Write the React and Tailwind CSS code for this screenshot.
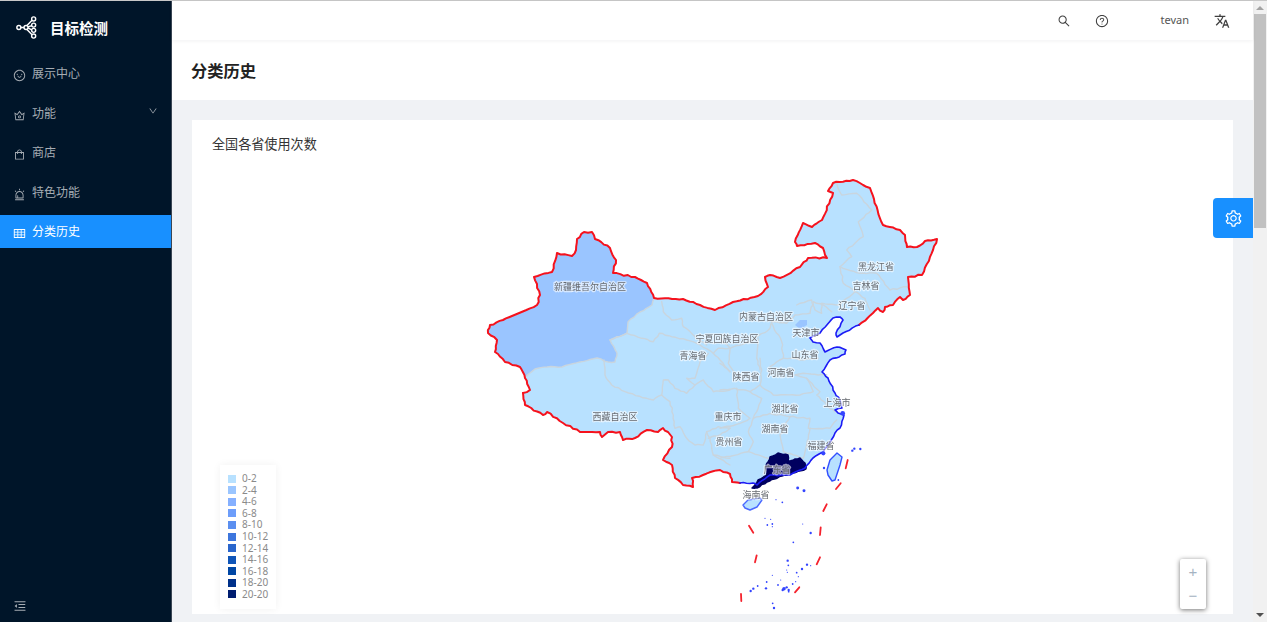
import React from "react";
import {
  AiOutlineSmile, AiOutlineCrown, AiOutlineShopping, AiOutlineAlert, AiOutlineTable,
  AiOutlineSearch, AiOutlineQuestionCircle, AiOutlineSetting, AiOutlineMenuFold, AiOutlineDown,
} from "react-icons/ai";
import { MdTranslate } from "react-icons/md";

const CJK = { fontFamily: '"Noto Sans CJK SC", "Noto Sans", sans-serif' };

const parse = (s) => s.split(" ").map((p) => p.split(",").map(Number));
const rnd = (x, y) => {
  const s = Math.sin(x * 12.9898 + y * 78.233) * 43758.5453;
  return s - Math.floor(s) - 0.5;
};
// Breaks a traced border into short, slightly uneven steps, as a real coastline has.
const rough = (pts, amp = 1.6, step = 4) => {
  const out = [];
  for (let i = 0; i < pts.length - 1; i++) {
    const [ax, ay] = pts[i];
    const [bx, by] = pts[i + 1];
    const len = Math.hypot(bx - ax, by - ay) || 1;
    const n = Math.max(1, Math.ceil(len / step));
    for (let k = 0; k < n; k++) {
      const t = k / n;
      const px = ax + (bx - ax) * t;
      const py = ay + (by - ay) * t;
      const o = k === 0 ? 0 : rnd(px, py) * amp;
      out.push([px - ((by - ay) / len) * o, py + ((bx - ax) / len) * o]);
    }
  }
  out.push(pts[pts.length - 1]);
  return out;
};
const str = (pts) => pts.map(([x, y]) => `${x.toFixed(1)},${y.toFixed(1)}`).join(" ");

const redNorthBase = parse("523,393 530,390 525,378 520,367 505,362 495,352 497,340 488,333 490,325 503,320 512,316 537,305 540,295 534,277 552,272 557,253 572,256 576,250 577,239 584,232 592,232 595,239 610,248 616,260 613,273 635,277 647,283 654,298 683,299 700,305 715,310 733,302 758,296 768,287 765,277 770,275 780,278 800,267 808,258 827,258 823,248 815,243 797,246 795,242 803,223 812,227 822,220 833,193 828,191 833,183 853,180 870,188 883,225 900,230 905,235 907,247 917,247 925,241 937,239 933,250 922,275 908,277 910,295 903,300 900,297 893,305 885,307 883,312 878,308 873,313 859,325");
const blueBase = parse("859,325 843,333 837,337 836,333 843,320 840,317 833,318 820,333 810,338 813,342 820,343 825,352 837,347 846,350 845,354 830,360 822,372 828,378 835,393 840,400 842,408 835,410 838,413 844,415 840,428 835,433 828,445 823,452 813,458 805,468 790,475 770,475 757,485 753,483 740,483");
const redSouthBase = parse("740,483 732,482 730,474 720,470 703,475 692,478 693,487 683,485 675,478 672,465 663,460 672,447 672,437 663,428 658,432 647,430 635,438 623,440 620,432 608,432 602,437 600,432 580,432 563,423 547,412 543,415 525,405 523,393");
const xjInnerBase = parse("654,298 652,305 640,312 628,322 627,333 610,340 617,353 615,362 608,362 597,358 580,362 562,367 547,367 535,369 525,378");

const redA = rough(redNorthBase.slice(0, 3));
const redB = rough(redNorthBase.slice(2, 28));
const redC = rough(redNorthBase.slice(27));
const redNorth = [...redA, ...redB.slice(1), ...redC.slice(1)];
const blueCoast = rough(blueBase, 1.2);
const redSouth = rough(redSouthBase);
const chinaFill = str([...redNorth, ...blueCoast, ...redSouth]);
const xinjiangFill = str([...redB, ...rough(xjInnerBase, 1.2)]);

const guangdong = str(rough(parse("752,488 758,480 767,475 766,466 770,457 778,453 788,455 788,461 800,458 805,463 806,469 782,476 767,482 757,488 752,488"), 1.2, 3));
const hainan = "743,505 748,500 760,498 762,500 757,507 750,510 745,508";
const taiwan = "827,470 830,460 837,453 842,457 840,465 835,480 832,481 828,475";
const beijing = "795,325 800,320 807,320 807,325 800,329";

const at = (ox, oy, arr) => str(rough(arr.map(([x, y]) => [ox + x / 3, oy + y / 3]), 1.4, 4));

const z9 = [
  [[30,135],[80,115],[125,130],[160,140],[178,115],[215,125],[260,135],[300,150],[340,175],[360,195],[390,230]],
  [[185,20],[190,50],[215,75],[245,70],[250,95],[285,125],[320,150]],
  [[12,195],[15,240],[35,270],[75,290],[140,310],[160,315],[185,300],[190,255],[205,255],[225,280],[260,295],[285,270],[260,250],[285,250],[300,200],[325,175]],
  [[185,300],[210,320],[220,360],[225,400],[240,395],[260,430],[285,450],[310,450],[320,410],[355,395],[390,400]],
  [[285,270],[310,255],[340,290],[390,285]],
  [[320,410],[330,430],[340,480],[390,510]],
  [[325,430],[360,420],[390,400]],
  [[340,480],[390,490]],
  [[340,175],[355,160],[390,160]],
];
const z10 = [
  [[0,130],[30,160],[100,135],[150,100],[155,80],[200,85],[225,60],[270,55],[280,20],[310,30],[335,50]],
  [[155,85],[185,140],[190,190],[150,215]],
  [[115,130],[110,190],[120,225]],
  [[30,160],[25,205],[45,235]],
  [[190,190],[225,190],[250,195],[295,190]],
  [[120,270],[160,300],[240,300],[280,290],[260,250],[225,240],[250,235],[295,240],[320,240]],
  [[260,250],[300,290],[290,300],[325,335],[345,350]],
  [[90,290],[125,310],[100,370],[150,355],[210,365],[270,370],[265,400],[330,400],[350,375]],
  [[100,370],[85,410],[100,440],[85,470],[145,490]],
  [[210,365],[180,420],[190,470],[250,490],[260,450],[270,400]],
  [[260,450],[300,460]],
  [[0,285],[45,280],[90,290],[120,270],[125,225],[120,190]],
  [[50,280],[55,340],[90,370],[60,385],[0,400]],
  [[0,490],[85,470]],
  [[0,205],[30,230]],
];
const z3 = [
  [[410,40],[425,75],[470,70],[515,120],[475,155],[490,200],[440,240],[455,260],[420,290],[430,340],[465,365],[415,405],[365,400],[365,430],[345,420],[335,390],[290,405]],
  [[420,290],[480,310],[530,310],[570,360],[620,350]],
  [[465,365],[495,385],[510,420]],
];

const dashes = [
  [[563,180],[557,205]], [[542,250],[528,267]], [[500,313],[490,333]], [[482,382],[480,405]],
  [[480,472],[470,493]], [[418,562],[405,577]], [[243,582],[244,603]], [[290,466],[285,487]], [[267,377],[280,398]],
];
const dots = [
  [577,152,2],[583,146,2],[601,147,2],[492,204,2],[413,264,2.5],[432,272,2.5],[348,299,1],[367,307,1.5],[315,355,1],[332,358,1],
  [322,375,1.5],[337,372,1.5],[337,380,1],[428,372,1],[452,399,2],[400,427,1.5],[383,482,2],[385,496,1.5],[380,510,1],[441,494,2],
  [452,497,1],[426,507,2],[410,518,1.5],[415,530,1],[382,517,1],[337,526,1],[320,546,1.5],[318,565,2],[354,555,1.5],[372,566,3],
  [380,562,2],[386,570,2],[398,552,1.5],[407,545,1],[272,573,2],[280,566,2],[293,558,1.5],[338,610,1.5],[342,624,2],[330,650,1.5],
  [362,540,1],[368,570,2],[535,240,1.5],[490,160,3.5],[548,40,4],[386,575,1.5],
];
const labels = [
  ["新疆维吾尔自治区",590,286],["西藏自治区",615,416],["黑龙江省",876,266],["吉林省",866,285],["辽宁省",852,305],
  ["内蒙古自治区",766,316],["天津市",806,332],["宁夏回族自治区",727,338],["青海省",693,355],["山东省",805,354],
  ["陕西省",746,376],["河南省",781,372],["上海市",837,402],["湖北省",785,408],["重庆市",728,416],["湖南省",775,428],
  ["贵州省",729,441],["福建省",821,445],["广东省",777,469],["海南省",756,494],
];
const legend = [
  ["0-2","#b8e1ff"],["2-4","#9ac5ff"],["4-6","#85b0ff"],["6-8","#6d9dfa"],["8-10","#5b8ff0"],["10-12","#3d76dd"],
  ["12-14","#2a66cc"],["14-16","#0f55b8"],["16-18","#0047a5"],["18-20","#00318a"],["20-20","#001d70"],
];
const menu = [
  ["展示中心", AiOutlineSmile],
  ["功能", AiOutlineCrown, true],
  ["商店", AiOutlineShopping],
  ["特色功能", AiOutlineAlert],
];

function Logo() {
  return (
    <svg width="21" height="23" viewBox="0 0 22 24" fill="none" stroke="white" strokeWidth="1.500">
      <circle cx="3" cy="12" r="2.100" />
      <circle cx="10.500" cy="12" r="2.100" />
      <circle cx="18.500" cy="3" r="2.100" />
      <circle cx="18.500" cy="9.500" r="2.100" />
      <circle cx="18.500" cy="15" r="2.100" />
      <circle cx="18.500" cy="21" r="2.100" />
      <path d="M5 12h3.500M11.500 10 16.800 4.500M12.500 11.500 16.500 10M12.500 12.500 16.500 14.500M11.500 14 16.800 19.500" />
    </svg>
  );
}

function ChinaMap() {
  return (
    <svg className="absolute inset-0 blur-[0.35px]" width="1041" height="494" viewBox="192 120 1041 494" fill="none" strokeLinejoin="round" strokeLinecap="round">
      <polygon points={chinaFill} fill="#b8e1ff" />
      <polygon points={xinjiangFill} fill="#9ac5ff" />
      <polygon points={beijing} fill="#9ac5ff" />
      <g stroke="#c9d5de" strokeWidth="1.400">
        <polyline points={str(rough(xjInnerBase, 1.2))} />
        {z9.map((l, i) => <polyline key={i} points={at(600, 295, l)} />)}
        {z10.map((l, i) => <polyline key={i} points={at(720, 295, l)} />)}
        {z3.map((l, i) => <polyline key={i} points={at(700, 170, l)} />)}
      </g>
      <polygon points={guangdong} fill="#00005f" stroke="#00005f" strokeWidth="1.400" />
      <polygon points={hainan} fill="#b8e1ff" stroke="#4a68ff" strokeWidth="1.400" />
      <polygon points={taiwan} fill="#b8e1ff" stroke="#3350ff" strokeWidth="1.400" />
      <polyline points={str(redNorth)} stroke="#f5121d" strokeWidth="2" />
      <polyline points={str(redSouth)} stroke="#f5121d" strokeWidth="2" />
      <polyline points={str(blueCoast)} stroke="#1c1cf5" strokeWidth="1.600" />
      <g stroke="#f5222d" strokeWidth="1.800">
        {dashes.map((l, i) => <polyline key={i} points={str(l.map(([x, y]) => [660 + x / 3, 400 + y / 3]))} />)}
      </g>
      <g fill="#3344ff">
        {dots.map(([x, y, r], i) => <circle key={i} cx={660 + x / 3} cy={400 + y / 3} r={r / 1.7} />)}
      </g>
      <g fontSize="9" textAnchor="middle" dominantBaseline="central" fill="#666a70" stroke="#ffffff" strokeOpacity="0.6" strokeWidth="2.400" style={{ ...CJK, paintOrder: "stroke" }}>
        {labels.map(([t, x, y]) => <text key={t} x={x} y={y}>{t}</text>)}
      </g>
    </svg>
  );
}

export default function App() {
  return (
    <div className="flex h-screen w-full flex-col overflow-hidden bg-[#f0f2f5]" style={CJK}>
      <div className="h-px shrink-0 bg-[#c8c8c8]" />
      <div className="flex min-h-0 flex-1">
        <aside className="flex w-[172px] shrink-0 flex-col bg-[#001529] border-r border-[#3a4654]">
          <div className="flex h-[55.500px] items-start gap-[13px] pl-[16px] pt-[15px]">
            <Logo />
            <span className="pt-[1px] text-[14.500px] font-bold leading-[22px] text-white">目标检测</span>
          </div>
          <nav className="flex flex-1 flex-col gap-[6.500px]">
            {menu.map(([t, Icon, arrow]) => (
              <div key={t} className="flex h-[33px] items-center text-[12px] text-[#a6adb4]">
                <Icon className="ml-[13px] mt-[5px] mr-[6px] text-[13px]" />
                <span>{t}</span>
                {arrow && <AiOutlineDown className="ml-auto mr-[13px] mb-[3px] text-[10px]" />}
              </div>
            ))}
            <div className="flex h-[33px] items-center bg-[#1890ff] text-[12px] text-white">
              <AiOutlineTable className="ml-[13px] mt-[5px] mr-[6px] text-[13px]" />
              <span>分类历史</span>
            </div>
          </nav>
          <div className="flex h-[32px] items-start pl-[13px] pt-[9px] text-[#a6adb4]">
            <AiOutlineMenuFold className="text-[14px]" />
          </div>
        </aside>

        <main className="relative flex min-w-0 flex-1 flex-col">
          <header className="z-10 flex h-[39px] shrink-0 items-center bg-white text-[#444] shadow-[0_1px_4px_rgba(0,21,41,0.06)]">
            <div className="ml-auto flex items-center text-[#3f3f3f]">
              <AiOutlineSearch className="mr-[24px] text-[14px]" />
              <AiOutlineQuestionCircle className="mr-[51px] text-[14px]" />
              <span className="mr-[25px] text-[11px] text-[#555]" style={{ fontFamily: '"Noto Sans", sans-serif' }}>tevan</span>
              <MdTranslate className="mr-[23px] text-[16px]" />
            </div>
          </header>
          <div className="flex h-[60px] shrink-0 items-center bg-white pl-5">
            <h1 className="-ml-px text-[16.250px] font-bold text-[#222]">分类历史</h1>
          </div>
          <div className="min-h-0 flex-1 px-5 pt-5 pb-2">
            <section className="relative h-full bg-white">
              <h2 className="pl-5 pt-[14px] text-[13.100px] leading-5 text-[#333]">全国各省使用次数</h2>
              <ChinaMap />
              <div className="absolute left-[28px] top-[345px] flex h-[144px] w-[56px] flex-col bg-white pl-2 pt-2 shadow-[0_0_8px_rgba(0,0,0,0.06)]" style={{ fontFamily: '"Noto Sans", sans-serif' }}>
                {legend.map(([t, c]) => (
                  <div key={t} className="flex h-[11.560px] items-center text-[10px] text-[#8a8a8a]">
                    <span className="mr-[6px] h-2 w-2 shrink-0" style={{ backgroundColor: c }} />
                    <span>{t}</span>
                  </div>
                ))}
              </div>
              <div className="absolute left-[988px] top-[439px] flex h-[50px] w-[26px] flex-col items-center justify-around rounded-[2px] bg-white pb-[2px] text-[15px] leading-none text-[#a5b3c2] shadow-[0_1px_5px_rgba(0,0,0,0.55)]" style={{ fontFamily: '"Liberation Sans", sans-serif' }}>
                <span>+</span>
                <span>−</span>
              </div>
            </section>
          </div>
          <button className="absolute right-0 top-[197px] flex h-10 w-10 items-center justify-center rounded-l-[4px] bg-[#1890ff] text-white">
            <AiOutlineSetting className="text-[19px]" />
          </button>
        </main>

        <div className="flex w-[14px] shrink-0 flex-col items-center bg-[#f1f1f1]">
          <div className="mt-[5px] h-0 w-0 border-x-[4px] border-b-[4px] border-x-transparent border-b-[#a3a3a3]" />
          <div className="mt-[4px] h-[214px] w-[11.500px] bg-[#c1c1c1]" />
          <div className="mt-auto mb-[5px] h-0 w-0 border-x-[4px] border-t-[4px] border-x-transparent border-t-[#505050]" />
        </div>
      </div>
    </div>
  );
}
